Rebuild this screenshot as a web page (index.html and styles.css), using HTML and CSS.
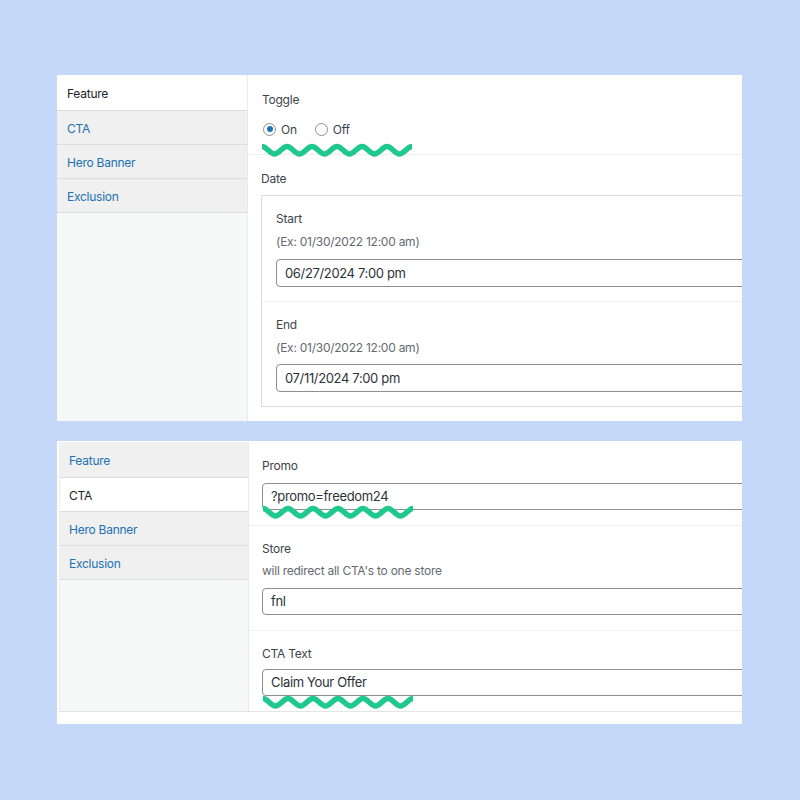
FILE: index.html
```html
<!DOCTYPE html>
<html lang="en">
<head>
<meta charset="UTF-8">
<meta name="viewport" content="width=device-width, initial-scale=1.0">
<title>Campaign settings</title>
<link rel="stylesheet" href="styles.css">
</head>
<body>

<div class="page">

  <!-- Panneau 1 : Feature -->
  <div class="panel">
    <ul class="tabs">
      <li class="tab active">Feature</li>
      <li class="tab">CTA</li>
      <li class="tab">Hero Banner</li>
      <li class="tab">Exclusion</li>
    </ul>
    <div class="main">
      <div class="section toggle-section">
        <div class="label">Toggle</div>
        <div class="radios">
          <span class="radio checked"></span><span class="radio-text">On</span>
          <span class="radio"></span><span class="radio-text">Off</span>
        </div>
        <svg class="squiggle squiggle-toggle" width="156" height="16" viewBox="0 0 156 16"><path d="M2 3.5 c4.5 0 8 7.5 12.5 7.5 s8 -7.5 12.5 -7.5 s8 7.5 12.5 7.5 s8 -7.5 12.5 -7.5 s8 7.5 12.5 7.5 s8 -7.5 12.5 -7.5 s8 7.5 12.5 7.5 s8 -7.5 12.5 -7.5 s8 7.5 12.5 7.5 s8 -7.5 12.5 -7.5 s8 7.5 12.5 7.5 s8 -7.5 12.5 -7.5"/></svg>
      </div>
      <div class="section date-section">
        <div class="label">Date</div>
        <div class="date-box">
          <div class="sub start">
            <div class="label">Start</div>
            <div class="hint">(Ex: 01/30/2022 12:00 am)</div>
            <div class="input tall">06/27/2024 7:00 pm</div>
          </div>
          <div class="sub end">
            <div class="label">End</div>
            <div class="hint">(Ex: 01/30/2022 12:00 am)</div>
            <div class="input tall">07/11/2024 7:00 pm</div>
          </div>
        </div>
      </div>
    </div>
  </div>

  <!-- Panneau 2 : CTA -->
  <div class="panel framed">
    <div class="inner">
      <ul class="tabs">
        <li class="tab">Feature</li>
        <li class="tab active">CTA</li>
        <li class="tab">Hero Banner</li>
        <li class="tab">Exclusion</li>
      </ul>
      <div class="main">
        <div class="section promo">
          <div class="label">Promo</div>
          <div class="input">?promo=freedom24</div>
          <svg class="squiggle squiggle-input" width="156" height="16" viewBox="0 0 156 16"><path d="M2 3.5 c4.5 0 8 7.5 12.5 7.5 s8 -7.5 12.5 -7.5 s8 7.5 12.5 7.5 s8 -7.5 12.5 -7.5 s8 7.5 12.5 7.5 s8 -7.5 12.5 -7.5 s8 7.5 12.5 7.5 s8 -7.5 12.5 -7.5 s8 7.5 12.5 7.5 s8 -7.5 12.5 -7.5 s8 7.5 12.5 7.5 s8 -7.5 12.5 -7.5"/></svg>
        </div>
        <div class="section store">
          <div class="label">Store</div>
          <div class="hint">will redirect all CTA's to one store</div>
          <div class="input">fnl</div>
        </div>
        <div class="section cta-text">
          <div class="label">CTA Text</div>
          <div class="input">Claim Your Offer</div>
          <svg class="squiggle squiggle-input" width="156" height="16" viewBox="0 0 156 16"><path d="M2 3.5 c4.5 0 8 7.5 12.5 7.5 s8 -7.5 12.5 -7.5 s8 7.5 12.5 7.5 s8 -7.5 12.5 -7.5 s8 7.5 12.5 7.5 s8 -7.5 12.5 -7.5 s8 7.5 12.5 7.5 s8 -7.5 12.5 -7.5 s8 7.5 12.5 7.5 s8 -7.5 12.5 -7.5 s8 7.5 12.5 7.5 s8 -7.5 12.5 -7.5"/></svg>
        </div>
      </div>
    </div>
  </div>

</div>

</body>
</html>
```

FILE: styles.css
```css
body {
  margin: 0;
  padding: 0;
  background-color: #c6d8fa;
  font-family: Inter, "Noto Sans", Arial, sans-serif;
  letter-spacing: -0.25px;
  color: #3c434a;
}

.page {
  width: 685px;
  padding: 75px 0 0 57px;
}

.panel {
  display: flex;
  height: 346px;
  margin-bottom: 20px;
  background-color: #fff;
  overflow: hidden;
}

.panel.framed {
  display: block;
  height: 283px;
  padding: 1px 0 0 2px;
  box-sizing: border-box;
}

.panel.framed .inner {
  display: flex;
  height: 269px;
  border-bottom: 1px solid #e2e4e7;
  border-left: 1px solid #eceef0;
}

/* Onglets */
.tabs {
  list-style: none;
  margin: 0;
  padding: 0;
  width: 190px;
  flex-shrink: 0;
  background-color: #f6f7f7;
  border-right: 1px solid #eaeaea;
}

.panel.framed .tabs {
  width: 188px;
}

.tab {
  height: 33px;
  line-height: 36px;
  padding-left: 10px;
  font-size: 12px;
  color: #2271b1;
  background-color: #f0f0f1;
  border-bottom: 1px solid #dcdcde;
  overflow: hidden;
}

.tab:first-child {
  height: 35px;
  line-height: 38px;
}

.panel.framed .tab {
  padding-left: 9px;
}

.tab.active {
  background-color: #fff;
  color: #1d2327;
}

/* Contenu */
.main {
  flex: 1;
  position: relative;
  overflow: hidden;
}

.section {
  position: relative;
  padding: 15px 0 14px 14px;
  border-bottom: 1px solid #f0f0f1;
}

.label {
  font-size: 12px;
  line-height: 16px;
  color: #3c434a;
}

.hint {
  font-size: 12px;
  line-height: 16px;
  color: #646970;
}

.input {
  width: 560px;
  height: 27px;
  box-sizing: border-box;
  border: 1px solid #8c8f94;
  border-radius: 4px;
  padding-left: 8px;
  font-size: 13px;
  line-height: 25px;
  letter-spacing: -0.35px;
  color: #2c3338;
}

.input.tall {
  height: 28px;
  line-height: 26px;
}

/* Toggle */
.toggle-section {
  padding: 17px 0 17px 14px;
}

.radios {
  display: flex;
  align-items: center;
  height: 16px;
  margin-top: 13px;
  padding-left: 1px;
}

.radio {
  width: 13px;
  height: 13px;
  border: 1px solid #8c8f94;
  border-radius: 50%;
  box-sizing: border-box;
  position: relative;
  background-color: #fff;
}

.radio.checked::after {
  content: "";
  position: absolute;
  left: 2.5px;
  top: 2.5px;
  width: 6px;
  height: 6px;
  border-radius: 50%;
  background-color: #2271b1;
}

.radio-text {
  font-size: 12px;
  margin: 0 18px 0 5px;
  color: #3c434a;
}

/* Date */
.date-section {
  padding: 16px 0 14px 13px;
  border-bottom: none;
}

.date-box {
  width: 560px;
  margin-top: 8px;
  border: 1px solid #dcdcde;
}

.sub {
  padding: 15px 0 14px 14px;
}

.sub.start {
  border-bottom: 1px solid #f0f0f1;
}

.sub .hint {
  margin-top: 7px;
  margin-bottom: 9px;
}

.sub.end .hint {
  margin-bottom: 8px;
}

/* Panneau CTA */
.framed .section {
  padding-left: 13px;
}

.promo {
  padding-top: 16px;
  padding-bottom: 15px;
}

.promo .input {
  margin-top: 9px;
}

.store {
  padding-top: 15px;
  padding-bottom: 15px;
}

.store .hint {
  margin-top: 6px;
  margin-bottom: 9px;
}

.cta-text {
  padding-top: 15px;
  border-bottom: none;
}

.cta-text .input {
  margin-top: 7px;
}

/* Vagues vertes */
.squiggle {
  position: absolute;
  left: 12px;
}

.squiggle path {
  fill: none;
  stroke: #1fc98e;
  stroke-width: 5.5;
}

.squiggle-toggle {
  top: 68px;
}

.squiggle-input {
  bottom: -1px;
}

.promo .squiggle-input {
  bottom: 4px;
}
```
